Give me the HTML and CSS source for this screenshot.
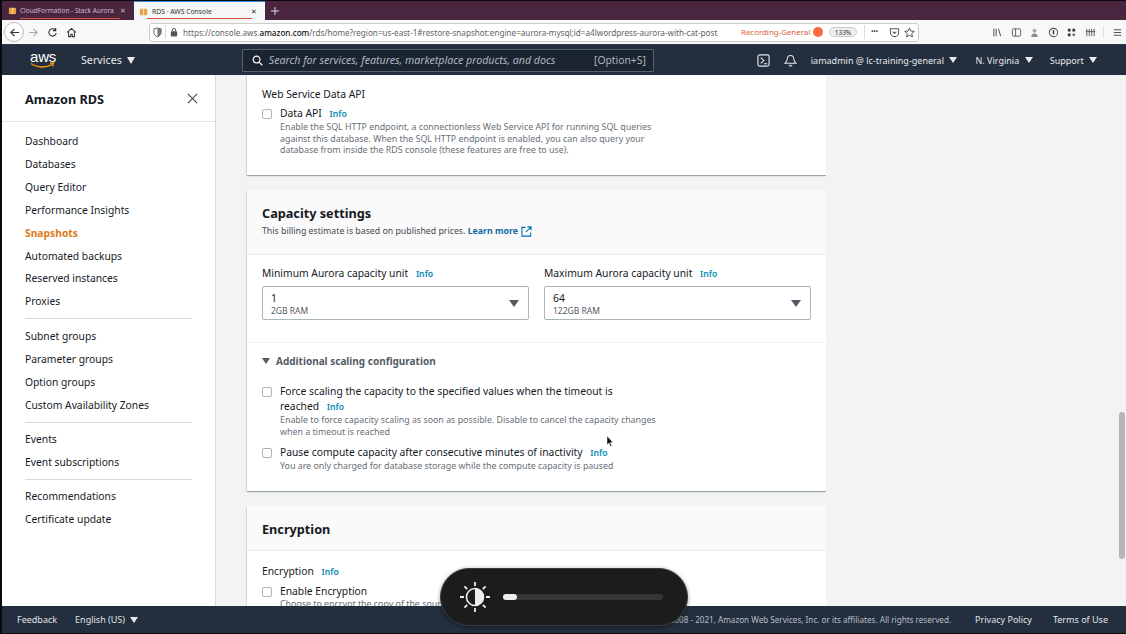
FILE: index.html
```html
<!DOCTYPE html>
<html lang="en">
<head>
<meta charset="utf-8">
<title>RDS · AWS Console</title>
<link rel="stylesheet" href="styles.css">
</head>
<body>
<div class="screen">
  <div class="tabbar">
    <div class="tab">
      <svg class="fav" viewBox="0 0 10 10"><path d="M1 2h8v7H1z" fill="#e8a33d"/><path d="M4.3 2h1.4v7H4.3z" fill="#f7d9a0"/></svg>
      <span class="tab-title">CloudFormation - Stack Aurora</span><span class="tab-x">✕</span>
      <i class="tab-line"></i>
    </div>
    <div class="tab tab-active">
      <svg class="fav" viewBox="0 0 10 10"><path d="M1 2h8v7H1z" fill="#e8a33d"/><path d="M4.3 2h1.4v7H4.3z" fill="#f7d9a0"/></svg>
      <span class="tab-title">RDS · AWS Console</span><span class="tab-x">✕</span>
      <i class="tab-line"></i>
    </div>
    <svg class="newtab" viewBox="0 0 10 10"><path d="M5 1v8M1 5h8" stroke="#ddd" stroke-width="1"/></svg>
  </div>
  <div class="toolbar">
    <div class="back"><svg viewBox="0 0 12 12" width="11" height="11"><path d="M11 6H2M6 2 2 6l4 4" fill="none" stroke="#333" stroke-width="1.3"/></svg></div>
    <svg class="tb-ico fwd" viewBox="0 0 12 12"><path d="M1 6h9M6 2l4 4-4 4" fill="none" stroke="#aaa" stroke-width="1.2"/></svg>
    <svg class="tb-ico" viewBox="0 0 12 12"><path d="M10 6.5A4 4 0 1 1 8.8 3M9.5 1v3h-3" fill="none" stroke="#333" stroke-width="1.2"/></svg>
    <svg class="tb-ico" viewBox="0 0 12 12"><path d="M1 6l5-4.5L11 6M2.8 5v5.5h2.4V8h1.6v2.500h2.400V5" fill="none" stroke="#333" stroke-width="1.1"/></svg>
    <div class="urlbar">
      <svg class="shield" viewBox="0 0 10 12"><path d="M1 2 5 1l4 1v4c0 2.500-2 4-4 5-2-1-4-2.500-4-5z" fill="none" stroke="#555" stroke-width="1"/><path d="M5 1v10c2-1 4-2.500 4-5V2z" fill="#777"/></svg>
      <span class="sep"></span>
      <svg class="lock" viewBox="0 0 10 12"><rect x="1" y="5" width="8" height="6.500" rx="1" fill="#555"/><path d="M3 5V3.500a2 2 0 0 1 4 0V5" fill="none" stroke="#555" stroke-width="1.200"/></svg>
      <span class="url">https://console.aws.<b>amazon.com</b>/rds/home?region=us-east-1#restore-snapshot:engine=aurora-mysql;id=a4lwordpress-aurora-with-cat-post</span>
      <span class="rec">Recording-General</span><i class="rec-dot"></i>
      <span class="zoom">133%</span>
      <span class="sep sep2"></span>
      <span class="dots">•••</span>
      <svg class="pocket" viewBox="0 0 12 12"><path d="M1.500 2h9v4a4.500 4.500 0 0 1-9 0z" fill="none" stroke="#555" stroke-width="1.100"/><path d="M4 5l2 2 2-2" fill="none" stroke="#555" stroke-width="1.100"/></svg>
      <svg class="star" viewBox="0 0 12 12"><path d="m6 1 1.500 3.400 3.700.4-2.800 2.400.8 3.600L6 9l-3.200 1.800.8-3.600L.8 4.800l3.700-.4z" fill="none" stroke="#444" stroke-width="1"/></svg>
    </div>
    <div class="tools">
      <svg viewBox="0 0 12 12"><path d="M2 2v8M4.500 2v8M7 2l2.500 8" stroke="#555" stroke-width="1.100" fill="none"/></svg>
      <svg viewBox="0 0 12 12"><rect x="1.500" y="2" width="9" height="8" rx="1.500" fill="none" stroke="#555"/><path d="M5 2v8" stroke="#555"/></svg>
      <svg viewBox="0 0 12 12"><circle cx="6" cy="4" r="2.200" fill="#b9a596"/><path d="M2.500 11c0-3 1.500-4 3.500-4s3.500 1 3.500 4z" fill="#8c8c8c"/></svg>
      <svg viewBox="0 0 12 12"><circle cx="6" cy="6" r="4.500" fill="none" stroke="#555" stroke-width="1.100"/><path d="M6 3.500V8" stroke="#333" stroke-width="1.600"/></svg>
      <svg viewBox="0 0 12 12"><path d="M2 2h3v3H2zM7 2h3v3H7zM2 7h3v3H2z" fill="#333"/><path d="M8.500 7v3M7 8.500h3" stroke="#333"/></svg>
      <svg viewBox="0 0 12 12"><path d="M2 2v8M4.700 2v8M7.300 2v8M10 2v8M1 5h10" stroke="#555" fill="none"/></svg>
      <span class="sep sep3"></span>
      <svg viewBox="0 0 12 12"><path d="M2 3h8M2 6h8M2 9h8" stroke="#555" stroke-width="1.100"/></svg>
    </div>
  </div>
  <header class="awsbar">
    <div class="logo">
      <span class="logo-text">aws</span>
      <svg class="smile" viewBox="0 0 26 7"><path d="M1 1.500c6 4.500 15 4.500 21 1M20 1.500l3.500-.5-.8 3.500" fill="none" stroke="#f90" stroke-width="1.300"/></svg>
    </div>
    <span class="services">Services</span><i class="caret caret-big"></i>
    <div class="search">
      <svg class="glass" viewBox="0 0 12 12"><circle cx="5" cy="5" r="3.700" fill="none" stroke="#fff" stroke-width="1.300"/><path d="m8 8 3.200 3.200" stroke="#fff" stroke-width="1.400"/></svg>
      <span class="search-text">Search for services, features, marketplace products, and docs</span>
      <span class="search-key">[Option+S]</span>
    </div>
    <svg class="hd-ico" viewBox="0 0 14 14"><rect x="1" y="1" width="12" height="12" rx="2" fill="none" stroke="#e8eaec" stroke-width="1.200"/><path d="M4 4l3.500 3L4 10M7.500 10.500H11" fill="none" stroke="#e8eaec" stroke-width="1.100"/></svg>
    <svg class="hd-ico bell" viewBox="0 0 14 14"><path d="M7 1.500c-2.500 0-3.500 2-3.500 4 0 2-1 3-2.500 4.500h12c-1.500-1.500-2.500-2.500-2.500-4.500 0-2-1-4-3.500-4zM5.500 11.500a1.500 1.500 0 0 0 3 0" fill="none" stroke="#e8eaec" stroke-width="1.100"/></svg>
    <span class="hd-link user">iamadmin @ lc-training-general</span><i class="caret"></i>
    <span class="hd-link region">N. Virginia</span><i class="caret"></i>
    <span class="hd-link support">Support</span><i class="caret"></i>
  </header>
  <div class="body">
    <nav class="side">
      <div class="side-head">
        <span class="side-title">Amazon RDS</span>
        <svg class="side-x" viewBox="0 0 12 12"><path d="m1 1 10 10M11 1 1 11" stroke="#444" stroke-width="1.200"/></svg>
      </div>
      <div class="side-group">
        <a>Dashboard</a><a>Databases</a><a>Query Editor</a><a>Performance Insights</a>
        <a class="current">Snapshots</a><a>Automated backups</a><a>Reserved instances</a><a>Proxies</a>
      </div>
      <div class="side-group group-2">
        <a>Subnet groups</a><a>Parameter groups</a><a>Option groups</a><a>Custom Availability Zones</a>
      </div>
      <div class="side-group">
        <a>Events</a><a>Event subscriptions</a>
      </div>
      <div class="side-group last">
        <a>Recommendations</a><a>Certificate update</a>
      </div>
    </nav>
    <main class="main">
      <section class="card card-top">
        <h4 class="field-label flush">Web Service Data API</h4>
        <div class="check">
          <i class="box"></i>
          <div class="check-body">
            <div class="check-label">Data API <a class="info">Info</a></div>
            <p class="hint">Enable the SQL HTTP endpoint, a connectionless Web Service API for running SQL queries against this database. When the SQL HTTP endpoint is enabled, you can also query your database from inside the RDS console (these features are free to use).</p>
          </div>
        </div>
      </section>
      <section class="card">
        <div class="card-head">
          <h2>Capacity settings</h2>
          <p>This billing estimate is based on published prices. <a class="learn">Learn more</a>
            <svg class="ext" viewBox="0 0 12 12"><path d="M5 1.500H1v9.500h9.500V7M7 1h4v4M11 1 5.500 6.500" fill="none" stroke="#0073bb" stroke-width="1.200"/></svg></p>
        </div>
        <div class="selects">
          <div class="sel-col">
            <label class="field-label">Minimum Aurora capacity unit <a class="info">Info</a></label>
            <div class="select"><div><div class="sel-val">1</div><div class="sel-sub">2GB RAM</div></div><i class="sel-caret"></i></div>
          </div>
          <div class="sel-col">
            <label class="field-label">Maximum Aurora capacity unit <a class="info">Info</a></label>
            <div class="select"><div><div class="sel-val">64</div><div class="sel-sub">122GB RAM</div></div><i class="sel-caret"></i></div>
          </div>
        </div>
        <div class="extra">
          <div class="extra-head"><i class="tri"></i>Additional scaling configuration</div>
          <div class="check">
            <i class="box"></i>
            <div class="check-body">
              <div class="check-label narrow">Force scaling the capacity to the specified values when the timeout is reached <a class="info">Info</a></div>
              <p class="hint">Enable to force capacity scaling as soon as possible. Disable to cancel the capacity changes when a timeout is reached</p>
            </div>
          </div>
          <div class="check check-2">
            <i class="box"></i>
            <div class="check-body">
              <div class="check-label">Pause compute capacity after consecutive minutes of inactivity <a class="info">Info</a></div>
              <p class="hint">You are only charged for database storage while the compute capacity is paused</p>
            </div>
          </div>
        </div>
      </section>
      <section class="card">
        <div class="card-head short"><h2>Encryption</h2></div>
        <div class="enc">
          <label class="field-label">Encryption <a class="info">Info</a></label>
          <div class="check">
            <i class="box"></i>
            <div class="check-body">
              <div class="check-label">Enable Encryption</div>
              <p class="hint">Choose to encrypt the copy of the source</p>
            </div>
          </div>
        </div>
      </section>
    </main>
    <div class="scrollbar"><i></i></div>
  </div>
  <footer class="foot">
    <span class="foot-a">Feedback</span>
    <span class="foot-b">English (US)</span><i class="caret"></i>
    <span class="foot-spacer"></span>
    <span class="foot-copy">© 2008 - 2021, Amazon Web Services, Inc. or its affiliates. All rights reserved.</span>
    <span class="foot-c">Privacy Policy</span>
    <span class="foot-d">Terms of Use</span>
  </footer>
  <svg class="cursor" viewBox="0 0 8 12"><path d="M1 0v9l2-2 1.500 3.500 1.300-.6L4.400 6.500H7z" fill="#111" stroke="#fff" stroke-width=".5"/></svg>
  <div class="hud">
    <svg class="hud-ico" viewBox="0 0 32 32">
      <circle cx="16" cy="16" r="8.500" fill="none" stroke="#eee" stroke-width="1.600"/>
      <path d="M16 7.500a8.500 8.500 0 0 1 0 17z" fill="#eee"/>
      <path d="M16 1v4M16 27v4M1 16h4M27 16h4M5.400 5.400l2.800 2.800M23.800 23.800l2.800 2.800M26.600 5.400l-2.800 2.800M8.200 23.800l-2.800 2.800" stroke="#eee" stroke-width="1.800"/>
    </svg>
    <div class="hud-track"><i></i></div>
  </div>
</div>
</body>
</html>
```
FILE: styles.css
```css
* { box-sizing: border-box; }
html, body { margin: 0; padding: 0; height: 100%; overflow: hidden; }
body { font-family: "Noto Sans", "Open Sans", sans-serif; color: #16191f; background: #000; }
a { text-decoration: none; }
i { display: block; font-style: normal; }
svg { display: block; flex: none; }

.screen { position: relative; width: 1126px; height: 634px; padding: 1px 0 1px 2px; display: flex; flex-direction: column; overflow: hidden; background: #0a0a0a; }

/* browser chrome */
.tabbar { height: 19px; background: #4a2540; display: flex; align-items: stretch; flex: none; }
.tab { position: relative; width: 132px; display: flex; align-items: center; padding: 0 0 0 6px; color: #c9bcc5; font-size: 6.500px; }
.tab-active { background: #f5f6f7; color: #333; border-top: 1px solid #2f8fe8; width: 131px; padding-left: 5px; font-size: 6.800px; }
.fav { width: 9px; height: 9px; margin-right: 3px; }
.tab-active .fav { margin-right: 4px; }
.tab-title { width: 96px; white-space: nowrap; }
.tab-x { font-size: 7px; margin-left: 4px; }
.tab-active .tab-x { margin-left: 3px; }
.tab-line { position: absolute; left: 18px; bottom: 1px; width: 100px; height: 1px; background: #d9513c; }
.tab-active .tab-line { left: 13px; width: 105px; }
.newtab { width: 10px; height: 10px; margin: 5px 0 0 5px; }

.toolbar { height: 24px; background: #f8f8f9; display: flex; align-items: center; flex: none; }
.back { width: 20px; height: 20px; margin-left: 2px; border-radius: 50%; border: 1px solid #bbb; background: #fff; display: flex; align-items: center; justify-content: center; }
.tb-ico { width: 11px; height: 11px; margin-left: 8px; }
.fwd { margin-left: 4px; }
.urlbar { width: 770px; height: 19px; margin-left: 72px; background: #fff; border: 1px solid #ccc; border-radius: 3px; display: flex; align-items: center; padding-left: 3px; }
.shield { width: 9px; height: 11px; }
.sep { width: 1px; height: 14px; background: #ddd; margin: 0 4px 0 3px; }
.lock { width: 8px; height: 10px; margin-right: 5px; }
.url { width: 558px; font-size: 8.130px; color: #5f6368; white-space: nowrap; }
.url b { font-weight: 500; color: #111; }
.rec { width: 71px; font-size: 7.900px; color: #d9603c; white-space: nowrap; }
.rec-dot { width: 10px; height: 10px; border-radius: 50%; background: #fb6a3c; margin-left: 1px; }
.zoom { font-size: 6.500px; width: 28px; height: 10px; line-height: 9px; border: 1px solid #ccc; border-radius: 5px; background: #eee; text-align: center; margin-left: 6px; color: #333; flex: none; }
.sep2 { margin: 0 6px 0 7px; }
.dots { font-size: 7px; color: #444; letter-spacing: -.4px; width: 15px; line-height: 10px; }
.pocket { width: 11px; height: 11px; margin-left: 3px; }
.star { width: 11px; height: 11px; margin-left: 4px; }
.tools { display: flex; align-items: center; margin-left: 73px; gap: 7.500px; }
.tools svg { width: 11px; height: 11px; }
.sep3 { margin: 0; height: 12px; }

/* AWS console header */
.awsbar { height: 31px; background: #232f3e; display: flex; align-items: center; flex: none; color: #e8eaec; border-top: 1px solid #2c3846; }
.logo { width: 26px; margin-left: 28px; position: relative; height: 24px; }
.logo-text { display: block; font-family: "Liberation Sans", sans-serif; font-size: 15px; line-height: 15px; color: #fff; text-align: center; margin-top: 1px; letter-spacing: -.2px; }
.smile { position: absolute; left: 0; top: 14px; width: 26px; height: 7px; }
.services { font-size: 10.700px; margin-left: 25px; }
.caret { width: 0; height: 0; border-left: 4px solid transparent; border-right: 4px solid transparent; border-top: 6px solid #e8eaec; margin-left: 5.500px; flex: none; }
.caret-big { border-left-width: 4.500px; border-right-width: 4.500px; border-top-width: 7px; margin-left: 5px; }
.search { width: 412px; height: 23px; margin-left: 107px; background: #1b2532; border: 1px solid #56616e; display: flex; align-items: center; padding: 0 7px 0 9px; border-radius: 1px; }
.glass { width: 11px; height: 11px; }
.search-text { font-size: 10.600px; font-style: italic; color: #aeb5bc; margin-left: 6px; flex: 1; white-space: nowrap; }
.search-key { font-size: 10.300px; color: #aeb5bc; }
.hd-ico { width: 13px; height: 13px; margin-left: 103px; }
.bell { margin-left: 14px; }
.hd-link { font-size: 9px; white-space: nowrap; }
.user { margin-left: 14px; }
.region { margin-left: 18px; }
.support { margin-left: 17px; }

/* body */
.body { flex: 1; min-height: 0; display: flex; background: #f2f3f3; }
.side { width: 214px; background: #fff; border-right: 1px solid #d5dbdb; flex: none; }
.side-head { height: 47px; border-bottom: 1px solid #e3e6e6; display: flex; align-items: center; justify-content: space-between; padding: 1px 17px 0 23px; }
.side-title { font-size: 12.700px; font-weight: 700; }
.side-x { width: 11px; height: 11px; }
.side-group { margin: 0 23px; padding: 8px 0 5px; display: flex; flex-direction: column; border-bottom: 1px solid #d5dbdb; }
.side-group a { font-size: 10.300px; line-height: 22.900px; color: #16191f; white-space: nowrap; }
.side-group a.current { color: #dd7a1a; font-weight: 700; }
.side-group + .side-group { padding-top: 5px; }
.side-group.group-2 { padding-top: 6px; }
.side-group.last { border-bottom: 0; }

.main { min-width: 0; overflow: hidden; padding: 0 0 0 31px; flex: none; width: 610px; }
.card { width: 579px; background: #fff; box-shadow: 0 1px 1px 0 rgba(0,28,36,.2), 1px 1px 1px 0 rgba(0,28,36,.1), -1px 1px 1px 0 rgba(0,28,36,.1); margin-bottom: 15px; }
.card-top { height: 100px; padding: 12px 16px 0 15px; }
.field-label { display: block; font-size: 10.300px; line-height: 14px; font-weight: 400; margin: 0; }
.info { color: #0a8bb5; font-size: 8.700px; font-weight: 600; margin-left: 5px; }
.check { display: flex; }
.box { width: 10px; height: 10px; border: 1px solid #aab7b8; border-radius: 2px; background: #fff; flex: none; margin-top: 3px; }
.check-body { margin-left: 8px; width: 378px; }
.check-label { font-size: 10.300px; line-height: 15px; white-space: nowrap; }
.check-label.narrow { width: 340px; white-space: normal; }
.hint { font-size: 8.850px; line-height: 11.500px; color: #687078; margin: 0; }
.card-top .field-label { margin-bottom: 5px; }

.card-head { height: 65px; background: #fafafa; border-bottom: 1px solid #eaeded; padding: 14px 16px 0 15px; }
.card-head h2 { font-size: 12.700px; line-height: 18px; font-weight: 700; margin: 0; }
.card-head p { display: flex; align-items: center; font-size: 8.780px; line-height: 13px; margin: 3px 0 0; color: #444b53; white-space: pre; }
.learn { color: #0f6a9e; font-weight: 700; }
.ext { width: 11px; height: 11px; margin-left: 3px; }
.card-head.short { height: 45px; }

.selects { display: flex; gap: 15px; padding: 11px 15px 22px; border-bottom: 1px solid #f0f1f1; }
.sel-col { width: 267px; }
.selects .field-label { margin-bottom: 5px; }
.select { height: 34px; border: 1px solid #aab7b8; border-radius: 2px; display: flex; align-items: center; justify-content: space-between; padding: 0 9px 0 8px; }
.sel-val { font-size: 10.300px; line-height: 14px; }
.sel-sub { font-size: 8.500px; line-height: 11px; color: #545b64; }
.sel-caret { width: 0; height: 0; border-left: 5px solid transparent; border-right: 5px solid transparent; border-top: 7px solid #545b64; }

.extra { padding: 11px 15px 18px; }
.extra-head { display: flex; align-items: center; font-size: 10px; font-weight: 700; color: #545b64; margin-bottom: 16px; line-height: 14px; }
.tri { width: 0; height: 0; border-left: 4px solid transparent; border-right: 4px solid transparent; border-top: 6px solid #545b64; margin-right: 6px; }
.check-2 { margin-top: 7px; }

.enc { padding: 13px 15px 0; }
.enc .field-label { margin-bottom: 5px; }
.foot-spacer { flex: 1; }

.scrollbar { flex: 1; min-width: 0; display: flex; justify-content: flex-end; }
.scrollbar i { width: 6px; height: 147px; margin: 337px 1px 0 0; background: #b4b6b8; border-radius: 3px; }

/* footer */
.foot { position: relative; height: 27px; background: #232f3e; color: #e0e3e6; display: flex; align-items: center; font-size: 9px; flex: none; padding: 0 18px 0 15px; }
.foot-b { margin-left: 18px; }
.foot-copy { font-size: 8.150px; color: #b8bec5; margin-right: 24px; }
.foot-d { margin-left: 21px; }

/* overlays */
.cursor { position: absolute; left: 606px; top: 436px; width: 8px; height: 12px; }
.hud { position: absolute; left: 440px; top: 568px; width: 248px; height: 58px; border-radius: 29px; background: #1c1c1c; border: 1px solid #3c3c3c; display: flex; align-items: center; padding: 0 24px 0 18px; box-shadow: 0 1px 4px rgba(0,0,0,.4); }
.hud-ico { width: 32px; height: 32px; }
.hud-track { flex: 1; height: 6px; margin-left: 12px; border-radius: 3px; background: #353535; }
.hud-track i { width: 14px; height: 6px; border-radius: 3px; background: #eee; }
```
